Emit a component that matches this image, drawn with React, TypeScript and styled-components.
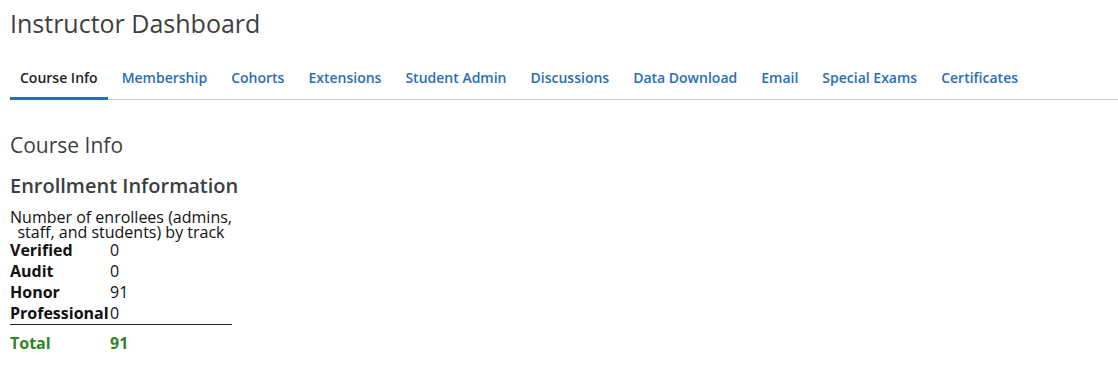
import React from 'react'
import styled, { createGlobalStyle } from 'styled-components';

const GlobalStyle = createGlobalStyle`
    body {
        margin: 0;
        background: #fff;
        font-family: "Open Sans", "Liberation Sans", sans-serif;
        color: #313131;
    }
`;

const Page = styled.div`
    padding: 7px 0 0 10px;
`;

const Title = styled.h1`
    margin: 0;
    font-size: 25px;
    font-weight: 400;
    line-height: 33px;
    color: #3d3e3f;
`;

const TabBar = styled.nav`
    display: flex;
    margin-top: 18px;
    border-bottom: 1px solid #d0d0d0;
`;

const Tab = styled.a<{ $active?: boolean }>`
    display: block;
    padding: 0 10px;
    margin-right: 4px;
    font-size: 14px;
    font-weight: 600;
    line-height: 39px;
    color: ${({ $active }) => ($active ? '#1f1f1f' : '#2a6eb4')};
    border-bottom: 3px solid ${({ $active }) => ($active ? '#2a6eb4' : 'transparent')};
    margin-bottom: -1px;
    text-decoration: none;
    cursor: pointer;
`;

const SectionTitle = styled.h2`
    margin: 30px 0 0;
    font-size: 21px;
    font-weight: 400;
    line-height: 30px;
    color: #3d3e3f;
`;

const SubTitle = styled.h3`
    margin: 12px 0 0;
    font-size: 20px;
    font-weight: 600;
    line-height: 28px;
    color: #3d3e3f;
`;

const EnrollTable = styled.table`
    margin-top: 10px;
    width: 222px;
    border-collapse: collapse;
    font-size: 16px;
    color: #111;
`;

const Caption = styled.caption`
    line-height: 15px;
    text-align: center;
`;

const Label = styled.th`
    padding: 0;
    text-align: left;
    font-weight: 700;
    line-height: 21px;
    width: 100px;
`;

const Value = styled.td`
    padding: 0;
    line-height: 21px;
`;

const LastRow = styled.tr`
    border-bottom: 1px solid #222;
`;

const TotalRow = styled.tr`
    color: #2e861f;
    font-weight: 700;
    th, td {
        padding-top: 8px;
    }
`;

const tabs = ['Course Info', 'Membership', 'Cohorts', 'Extensions', 'Student Admin', 'Discussions', 'Data Download', 'Email', 'Special Exams', 'Certificates'];

const tracks: [string, number][] = [
    ['Verified', 0],
    ['Audit', 0],
    ['Honor', 91],
];

const App: React.FC = () => {
    return (
        <Page>
            <GlobalStyle />
            <Title>Instructor Dashboard</Title>
            <TabBar>
                {tabs.map((t, i) => (
                    <Tab key={t} $active={i === 0}>{t}</Tab>
                ))}
            </TabBar>
            <SectionTitle>Course Info</SectionTitle>
            <SubTitle>Enrollment Information</SubTitle>
            <EnrollTable>
                <Caption>Number of enrollees (admins, staff, and students) by track</Caption>
                <tbody>
                    {tracks.map(([name, n]) => (
                        <tr key={name}>
                            <Label>{name}</Label>
                            <Value>{n}</Value>
                        </tr>
                    ))}
                    <LastRow>
                        <Label>Professional</Label>
                        <Value>0</Value>
                    </LastRow>
                    <TotalRow>
                        <Label>Total</Label>
                        <Value>91</Value>
                    </TotalRow>
                </tbody>
            </EnrollTable>
        </Page>
    )
}

export default App
